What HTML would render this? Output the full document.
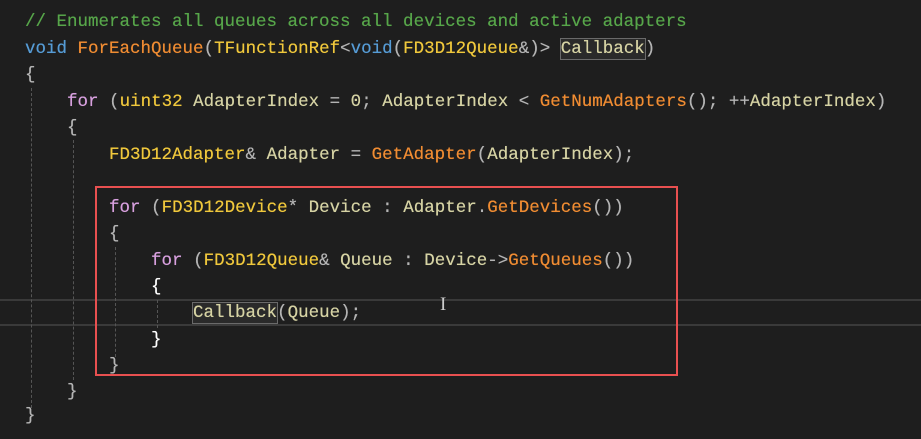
<!DOCTYPE html>
<html><head><meta charset="utf-8"><style>
html,body{margin:0;padding:0;}
body{width:921px;height:439px;background:#1e1e1e;position:relative;overflow:hidden;font-family:"Liberation Mono",monospace;font-size:17.5px;}
.l{position:absolute;left:25px;white-space:pre;line-height:26px;color:#dcdcdc;text-shadow:0 0 0.4px currentColor;}
.c{color:#57a64a}.k{color:#569cd6}.f{color:#f08c32}.t{color:#f0c83c}.v{color:#d6d3a4}.p{color:#d8a0df}.o{color:#b4b4b4}
.g{position:absolute;width:0;border-left:1px dashed #555;}
.box{outline:1px solid #6a6a6a;background:#2a2a2a}
</style></head><body>
<div style="position:absolute;left:0;top:299px;width:921px;height:27px;border-top:2px solid #3a3a3a;border-bottom:2px solid #3a3a3a;box-sizing:border-box"></div>
<div class="g" style="left:31px;top:88px;height:320px"></div>
<div class="g" style="left:73px;top:140px;height:240px"></div>
<div class="g" style="left:115px;top:247px;height:110px"></div>
<div class="g" style="left:157px;top:300px;height:28px"></div>
<div class="l" style="top:9px"><span class="c">// Enumerates all queues across all devices and active adapters</span></div>
<div class="l" style="top:36px"><span class="k">void</span> <span class="f">ForEachQueue</span><span class="o">(</span><span class="t">TFunctionRef</span><span class="o">&lt;</span><span class="k">void</span><span class="o">(</span><span class="t">FD3D12Queue</span><span class="o">&amp;)&gt;</span> <span class="v box">Callback</span><span class="o">)</span></div>
<div class="l" style="top:62px"><span class="o">{</span></div>
<div class="l" style="top:89px">    <span class="p">for</span> <span class="o">(</span><span class="t">uint32</span> <span class="v">AdapterIndex</span> <span class="o">=</span> <span class="v">0</span><span class="o">;</span> <span class="v">AdapterIndex</span> <span class="o">&lt;</span> <span class="f">GetNumAdapters</span><span class="o">();</span> <span class="o">++</span><span class="v">AdapterIndex</span><span class="o">)</span></div>
<div class="l" style="top:115px">    <span class="o">{</span></div>
<div class="l" style="top:142px">        <span class="t">FD3D12Adapter</span><span class="o">&amp;</span> <span class="v">Adapter</span> <span class="o">=</span> <span class="f">GetAdapter</span><span class="o">(</span><span class="v">AdapterIndex</span><span class="o">);</span></div>
<div class="l" style="top:195px">        <span class="p">for</span> <span class="o">(</span><span class="t">FD3D12Device</span><span class="o">*</span> <span class="v">Device</span> <span class="o">:</span> <span class="v">Adapter</span><span class="o">.</span><span class="f">GetDevices</span><span class="o">())</span></div>
<div class="l" style="top:221px">        <span class="o">{</span></div>
<div class="l" style="top:248px">            <span class="p">for</span> <span class="o">(</span><span class="t">FD3D12Queue</span><span class="o">&amp;</span> <span class="v">Queue</span> <span class="o">:</span> <span class="v">Device</span><span class="o">-&gt;</span><span class="f">GetQueues</span><span class="o">())</span></div>
<div class="l" style="top:274px">            <span style="color:#fff">{</span></div>
<div class="l" style="top:300px">                <span class="v box">Callback</span><span class="o">(</span><span class="v">Queue</span><span class="o">);</span></div>
<div class="l" style="top:327px">            <span style="color:#fff">}</span></div>
<div class="l" style="top:353px">        <span class="o">}</span></div>
<div class="l" style="top:379px">    <span class="o">}</span></div>
<div class="l" style="top:403px"><span class="o">}</span></div>
<div style="position:absolute;left:95px;top:186px;width:579px;height:186px;border:2px solid #e85050"></div>
<div style="position:absolute;left:440px;top:296px;color:#ccc;font-family:'Liberation Serif',serif;font-size:19px;line-height:18px">I</div>
</body></html>
